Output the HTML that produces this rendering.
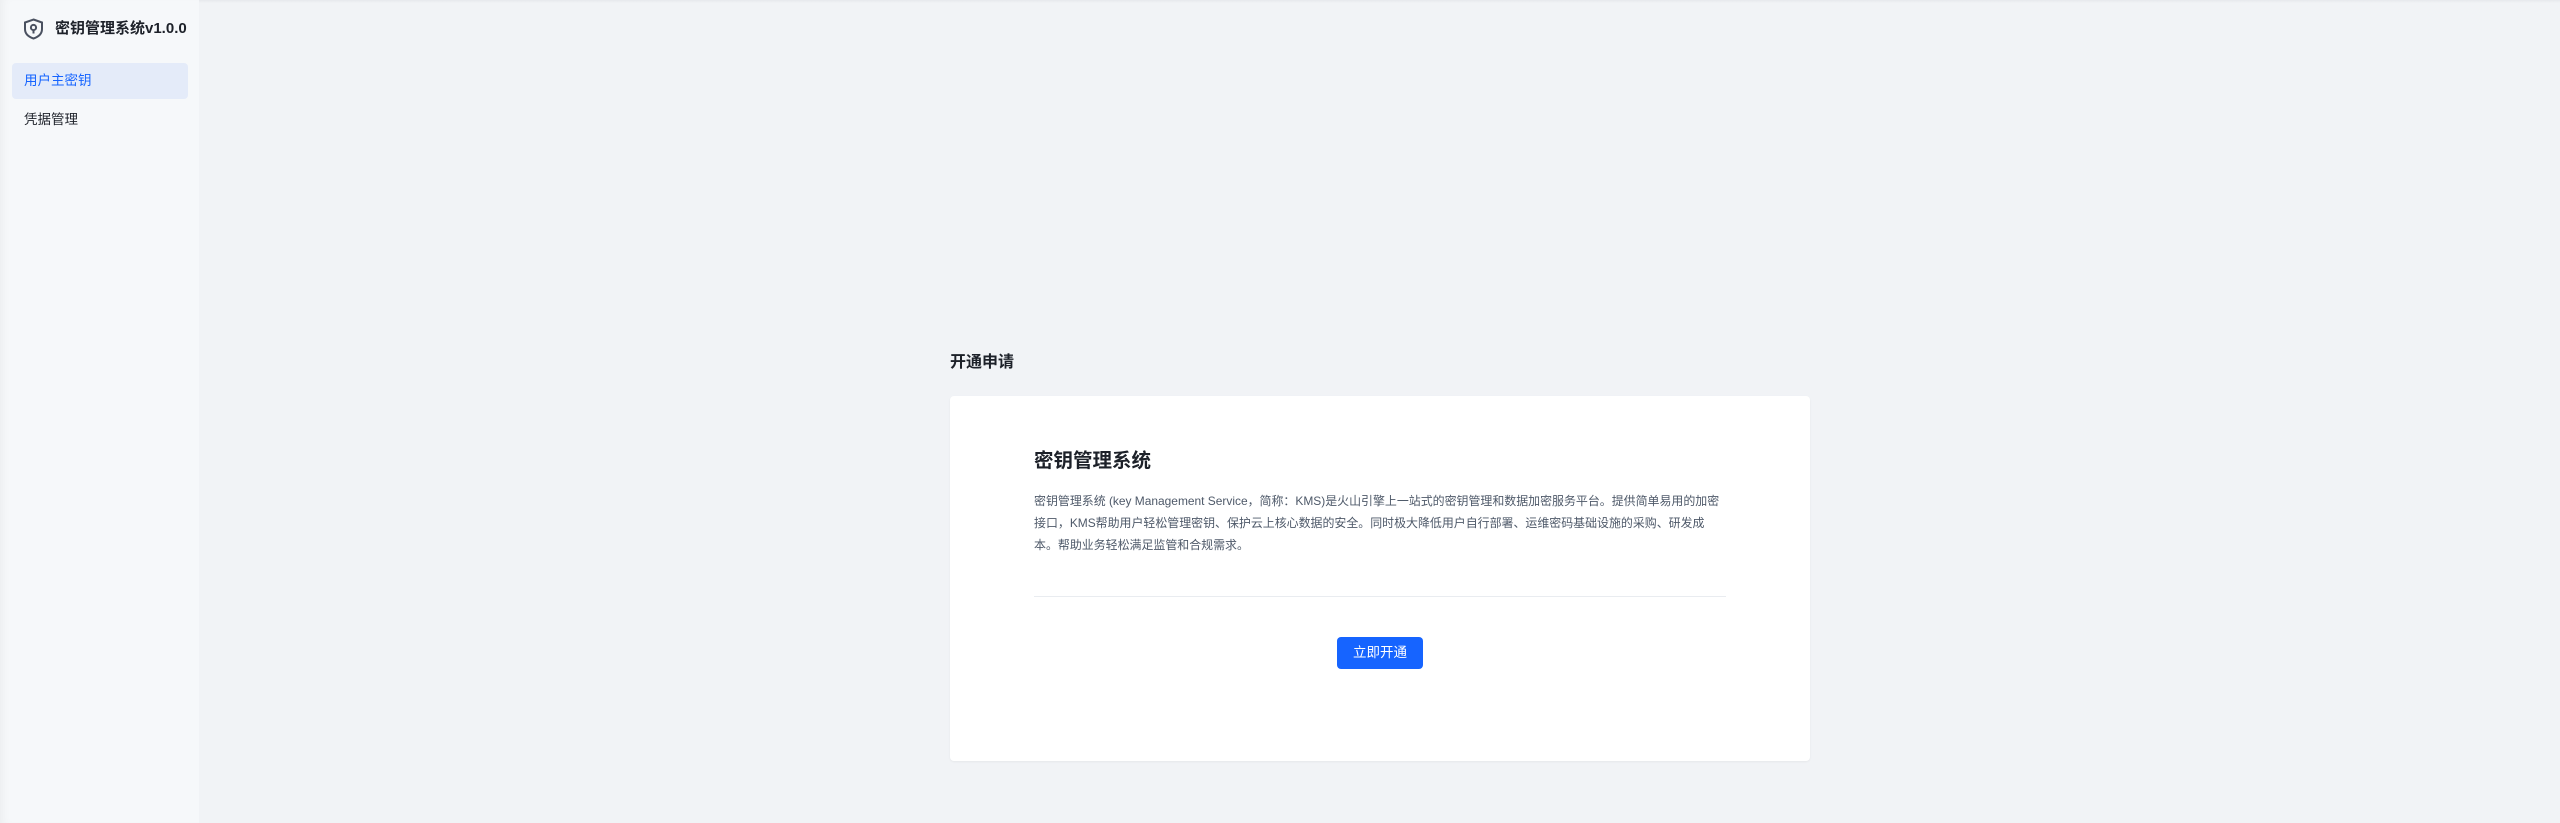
<!DOCTYPE html>
<html><head><meta charset="utf-8"><style>
*{margin:0;padding:0;box-sizing:border-box}
body{width:2560px;height:823px;background:#f1f3f6;font-family:"Liberation Sans","Noto Sans CJK SC",sans-serif;position:relative;overflow:hidden;color:#1d2129}
.side{position:absolute;left:0;top:0;width:199px;height:823px;background:#f6f8fa;box-shadow:inset 8px 0 10px -6px rgba(0,0,0,.05)}
.top{position:absolute;left:0;top:0;width:2560px;height:3px;background:linear-gradient(#e6e8ec,#f1f3f6)}
.logo{position:absolute;left:23px;top:18px}
.title{position:absolute;left:55px;top:18px;font-size:15px;font-weight:bold;line-height:22px;color:#1d2129}
.item{position:absolute;left:12px;width:176px;height:36px;line-height:36px;padding-left:12px;font-size:13.5px;border-radius:4px}
.act{top:63px;background:#e4ebf9;color:#1664ff}
.i2{top:102px;color:#1d2129}
.h{position:absolute;left:950px;top:351px;font-size:16px;font-weight:bold;line-height:24px}
.card{position:absolute;left:950px;top:396px;width:860px;height:365px;background:#fff;border-radius:4px;box-shadow:0 1px 2px rgba(0,0,0,.05)}
.ct{position:absolute;left:84px;top:51px;font-size:19.5px;font-weight:bold;line-height:28px}
.p{position:absolute;left:84px;top:94px;font-size:11.95px;line-height:22px;color:#4e5969;white-space:nowrap}
.hr{position:absolute;left:84px;top:200px;width:692px;height:1px;background:#e9ecf0}
.btn{position:absolute;left:387px;top:241px;width:86px;height:32px;background:#1664ff;color:#fff;border-radius:4px;font-size:13.5px;line-height:32px;text-align:center}
</style></head><body>
<div class="top"></div>
<div class="side">
<svg class="logo" width="21" height="22" viewBox="0 0 21 22" fill="none" stroke="#4a5160" stroke-width="2"><path d="M10.5 1.5 L19 4.5 V11 C19 16 15 19 10.5 20.5 C6 19 2 16 2 11 V4.5 Z"/><circle cx="10.5" cy="9.5" r="2.6"/><path d="M10.5 12.2 V15.5"/></svg>
<div class="title">密钥管理系统v1.0.0</div>
<div class="item act">用户主密钥</div>
<div class="item i2">凭据管理</div>
</div>
<div class="h">开通申请</div>
<div class="card">
<div class="ct">密钥管理系统</div>
<div class="p">密钥管理系统 (key Management Service，简称：KMS)是火山引擎上一站式的密钥管理和数据加密服务平台。提供简单易用的加密<br>接口，KMS帮助用户轻松管理密钥、保护云上核心数据的安全。同时极大降低用户自行部署、运维密码基础设施的采购、研发成<br>本。帮助业务轻松满足监管和合规需求。</div>
<div class="hr"></div>
<div class="btn">立即开通</div>
</div>
</body></html>
